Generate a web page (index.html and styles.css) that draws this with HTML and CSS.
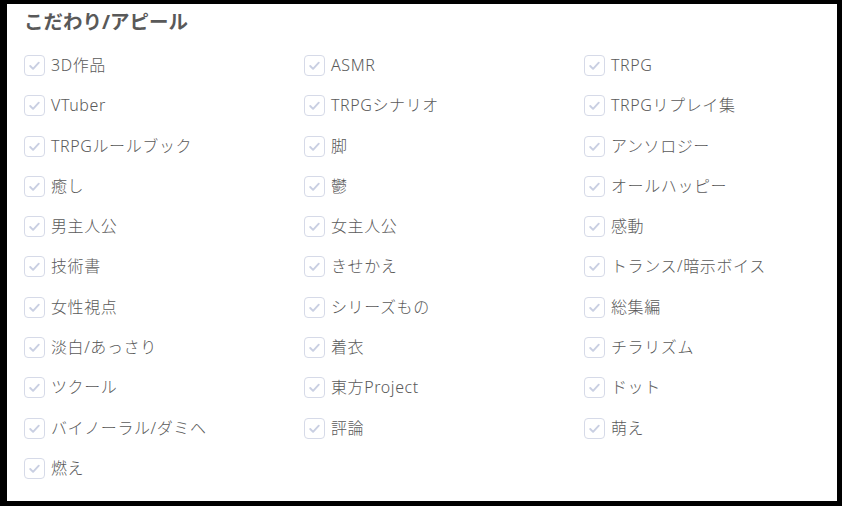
FILE: index.html
```html
<!DOCTYPE html>
<html lang="ja">
<head>
<meta charset="utf-8">
<link rel="stylesheet" href="styles.css">
</head>
<body>
<div class="panel">
  <h2 class="title">こだわり/アピール</h2>
  <div class="grid">
    <label class="item"><span class="box"><svg viewBox="0 0 20 20"><path d="M5.5 10.5l3 3 6-6.5"/></svg></span><span class="txt">3D作品</span></label>
    <label class="item"><span class="box"><svg viewBox="0 0 20 20"><path d="M5.5 10.5l3 3 6-6.5"/></svg></span><span class="txt">ASMR</span></label>
    <label class="item"><span class="box"><svg viewBox="0 0 20 20"><path d="M5.5 10.5l3 3 6-6.5"/></svg></span><span class="txt">TRPG</span></label>
    <label class="item"><span class="box"><svg viewBox="0 0 20 20"><path d="M5.5 10.5l3 3 6-6.5"/></svg></span><span class="txt">VTuber</span></label>
    <label class="item"><span class="box"><svg viewBox="0 0 20 20"><path d="M5.5 10.5l3 3 6-6.5"/></svg></span><span class="txt">TRPGシナリオ</span></label>
    <label class="item"><span class="box"><svg viewBox="0 0 20 20"><path d="M5.5 10.5l3 3 6-6.5"/></svg></span><span class="txt">TRPGリプレイ集</span></label>
    <label class="item"><span class="box"><svg viewBox="0 0 20 20"><path d="M5.5 10.5l3 3 6-6.5"/></svg></span><span class="txt">TRPGルールブック</span></label>
    <label class="item"><span class="box"><svg viewBox="0 0 20 20"><path d="M5.5 10.5l3 3 6-6.5"/></svg></span><span class="txt">脚</span></label>
    <label class="item"><span class="box"><svg viewBox="0 0 20 20"><path d="M5.5 10.5l3 3 6-6.5"/></svg></span><span class="txt">アンソロジー</span></label>
    <label class="item"><span class="box"><svg viewBox="0 0 20 20"><path d="M5.5 10.5l3 3 6-6.5"/></svg></span><span class="txt">癒し</span></label>
    <label class="item"><span class="box"><svg viewBox="0 0 20 20"><path d="M5.5 10.5l3 3 6-6.5"/></svg></span><span class="txt">鬱</span></label>
    <label class="item"><span class="box"><svg viewBox="0 0 20 20"><path d="M5.5 10.5l3 3 6-6.5"/></svg></span><span class="txt">オールハッピー</span></label>
    <label class="item"><span class="box"><svg viewBox="0 0 20 20"><path d="M5.5 10.5l3 3 6-6.5"/></svg></span><span class="txt">男主人公</span></label>
    <label class="item"><span class="box"><svg viewBox="0 0 20 20"><path d="M5.5 10.5l3 3 6-6.5"/></svg></span><span class="txt">女主人公</span></label>
    <label class="item"><span class="box"><svg viewBox="0 0 20 20"><path d="M5.5 10.5l3 3 6-6.5"/></svg></span><span class="txt">感動</span></label>
    <label class="item"><span class="box"><svg viewBox="0 0 20 20"><path d="M5.5 10.5l3 3 6-6.5"/></svg></span><span class="txt">技術書</span></label>
    <label class="item"><span class="box"><svg viewBox="0 0 20 20"><path d="M5.5 10.5l3 3 6-6.5"/></svg></span><span class="txt">きせかえ</span></label>
    <label class="item"><span class="box"><svg viewBox="0 0 20 20"><path d="M5.5 10.5l3 3 6-6.5"/></svg></span><span class="txt">トランス/暗示ボイス</span></label>
    <label class="item"><span class="box"><svg viewBox="0 0 20 20"><path d="M5.5 10.5l3 3 6-6.5"/></svg></span><span class="txt">女性視点</span></label>
    <label class="item"><span class="box"><svg viewBox="0 0 20 20"><path d="M5.5 10.5l3 3 6-6.5"/></svg></span><span class="txt">シリーズもの</span></label>
    <label class="item"><span class="box"><svg viewBox="0 0 20 20"><path d="M5.5 10.5l3 3 6-6.5"/></svg></span><span class="txt">総集編</span></label>
    <label class="item"><span class="box"><svg viewBox="0 0 20 20"><path d="M5.5 10.5l3 3 6-6.5"/></svg></span><span class="txt">淡白/あっさり</span></label>
    <label class="item"><span class="box"><svg viewBox="0 0 20 20"><path d="M5.5 10.5l3 3 6-6.5"/></svg></span><span class="txt">着衣</span></label>
    <label class="item"><span class="box"><svg viewBox="0 0 20 20"><path d="M5.5 10.5l3 3 6-6.5"/></svg></span><span class="txt">チラリズム</span></label>
    <label class="item"><span class="box"><svg viewBox="0 0 20 20"><path d="M5.5 10.5l3 3 6-6.5"/></svg></span><span class="txt">ツクール</span></label>
    <label class="item"><span class="box"><svg viewBox="0 0 20 20"><path d="M5.5 10.5l3 3 6-6.5"/></svg></span><span class="txt">東方Project</span></label>
    <label class="item"><span class="box"><svg viewBox="0 0 20 20"><path d="M5.5 10.5l3 3 6-6.5"/></svg></span><span class="txt">ドット</span></label>
    <label class="item"><span class="box"><svg viewBox="0 0 20 20"><path d="M5.5 10.5l3 3 6-6.5"/></svg></span><span class="txt">バイノーラル/ダミヘ</span></label>
    <label class="item"><span class="box"><svg viewBox="0 0 20 20"><path d="M5.5 10.5l3 3 6-6.5"/></svg></span><span class="txt">評論</span></label>
    <label class="item"><span class="box"><svg viewBox="0 0 20 20"><path d="M5.5 10.5l3 3 6-6.5"/></svg></span><span class="txt">萌え</span></label>
    <label class="item"><span class="box"><svg viewBox="0 0 20 20"><path d="M5.5 10.5l3 3 6-6.5"/></svg></span><span class="txt">燃え</span></label>
  </div>
</div>
</body>
</html>
```

FILE: styles.css
```css
html {
  background: #000;
  height: 100%;
}
body {
  margin: 0;
  padding: 4px 5px 5px 7px;
  height: 100%;
  box-sizing: border-box;
  font-family: "Noto Sans", "Noto Sans CJK JP", sans-serif;
}
.panel {
  background: #fff;
  height: 100%;
  box-sizing: border-box;
  padding: 7px 0 0 17px;
}
.title {
  margin: 0;
  font-size: 19.5px;
  font-weight: 700;
  color: #595959;
  line-height: 22px;
}
.grid {
  display: grid;
  grid-template-columns: repeat(3, 280px);
  grid-auto-rows: 40.3px;
  margin-top: 22px;
}
.item {
  display: flex;
  align-items: center;
  gap: 6px;
  height: 21px;
}
.box {
  width: 21px;
  height: 21px;
  box-sizing: border-box;
  border: 1.5px solid #d6dae8;
  border-radius: 4px;
  display: flex;
  align-items: center;
  justify-content: center;
  flex: none;
}
.box svg {
  width: 19px;
  height: 19px;
  fill: none;
  stroke: #c9cfe2;
  stroke-width: 2;
  stroke-linecap: round;
  stroke-linejoin: round;
}
.txt {
  font-size: 16px;
  font-weight: 300;
  letter-spacing: 0.6px;
  color: #5a5a5a;
  line-height: 21px;
}
```
